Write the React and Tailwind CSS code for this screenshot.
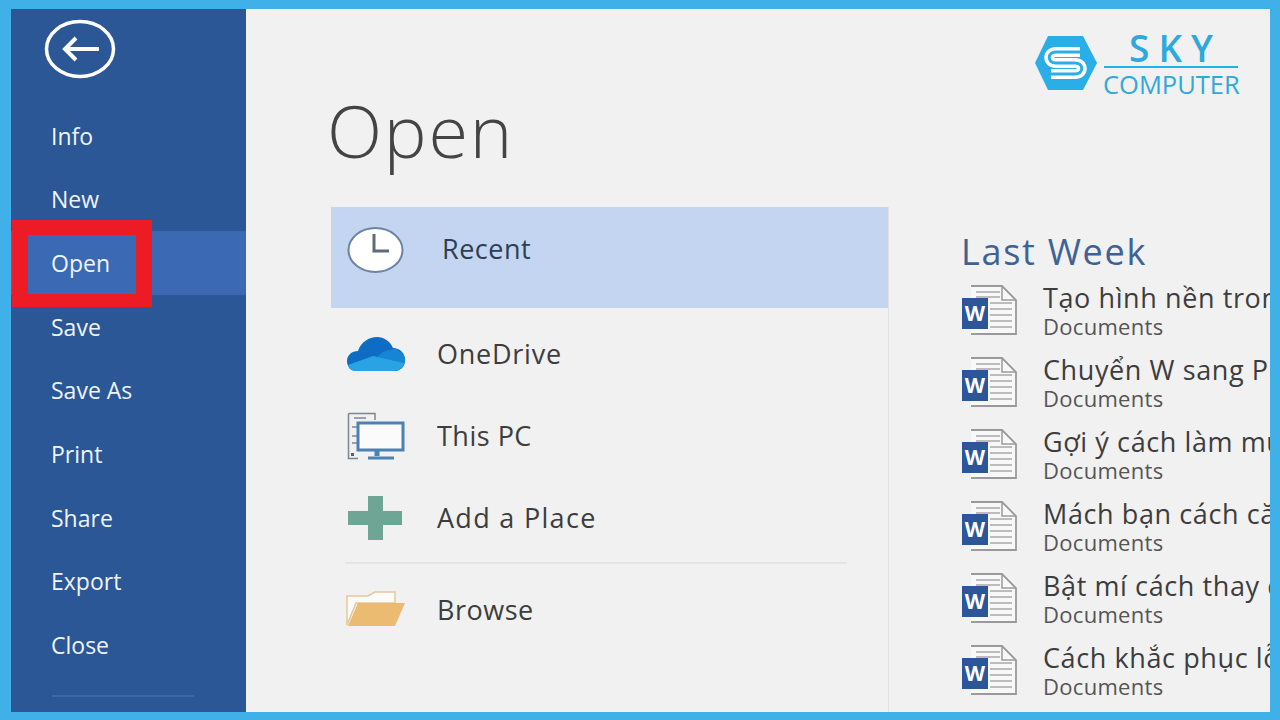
const navItems = ['Info', 'New', 'Open', 'Save', 'Save As', 'Print', 'Share', 'Export', 'Close'];

const recentDocs = [
  'Tạo hình nền trong Word',
  'Chuyển W sang PDF',
  'Gợi ý cách làm mục lục',
  'Mách bạn cách căn lề',
  'Bật mí cách thay đổi font',
  'Cách khắc phục lỗi font',
];

const BackIcon = () => (
  <svg width="72" height="60" viewBox="0 0 72 60" fill="none" stroke="white">
    <ellipse cx="36" cy="30" rx="33.5" ry="27.5" strokeWidth="3.5" />
    <path d="M21 30H55" strokeWidth="4" />
    <path d="M32 19L21 30L32 41" strokeWidth="4" />
  </svg>
);

const ClockIcon = () => (
  <svg width="58" height="48" viewBox="0 0 58 48">
    <ellipse cx="28.5" cy="24" rx="27" ry="22" fill="white" stroke="#6b84a3" strokeWidth="2" />
    <path d="M27 8V25H42" fill="none" stroke="#5d6b7c" strokeWidth="3" />
  </svg>
);

const CloudIcon = () => (
  <svg width="58" height="36" viewBox="0 0 58 36">
    <path d="M10 35C3 35 0 30 0 25C0 19 5 15 11 15C14 6 22 1 30 1C37 1 43 5 46 12C53 12 58 17 58 24C58 31 53 35 47 35Z" fill="#0f6cc4" />
    <path d="M30 22C33 17 38 14 44 14C46 12 50 13 52 15C56 17 58 20 58 24C58 31 53 35 47 35H14Z" fill="#1785d6" />
    <path d="M10 35C5 35 2 33 1 29L26 20L57 27C56 32 52 35 47 35Z" fill="#29a3e4" />
  </svg>
);

const PcIcon = () => (
  <svg width="58" height="48" viewBox="0 0 58 48" fill="none">
    <path d="M1.5 1.5H28V8M1.5 1.5V46.5H11" stroke="#7d8794" strokeWidth="1.5" />
    <path d="M7 6H19M5 15H10M5 24H10M5 31H10" stroke="#7d8794" strokeWidth="1.5" />
    <rect x="4" y="41" width="3" height="3" fill="#55606d" />
    <rect x="11" y="11" width="45" height="27" fill="#fbfbfb" stroke="#4a82b5" strokeWidth="3" />
    <path d="M30 38V44" stroke="#4a82b5" strokeWidth="5" />
    <path d="M21 46H47" stroke="#4a82b5" strokeWidth="3" />
  </svg>
);

const PlusIcon = () => (
  <svg width="54" height="44" viewBox="0 0 54 44">
    <path d="M20 0H35V15H54V29H35V44H20V29H0V15H20Z" fill="#6fa594" />
  </svg>
);

const FolderIcon = () => (
  <svg width="60" height="38" viewBox="0 0 60 38">
    <path d="M1 36V7H22L29 3H49V14H10Z" fill="#fbfbfb" stroke="#e6c795" strokeWidth="1.5" />
    <path d="M12 14H59L49 37H2Z" fill="#ebbb72" />
  </svg>
);

const WordDocIcon = () => (
  <svg width="56" height="50" viewBox="0 0 56 50" fill="none">
    <path d="M9 1H40L54 15V49H9" fill="#f8f8f8" stroke="#9a9a9a" strokeWidth="1.8" />
    <path d="M40 1V15H54" stroke="#9a9a9a" strokeWidth="1.5" />
    <path d="M14 7H38M14 12H38M28 18H50M28 24H50M28 30H50M28 36H50M28 42H50" stroke="#a8a8a8" strokeWidth="1.5" />
    <rect x="0" y="13" width="26" height="31" fill="#2b579a" />
    <text x="13" y="36" textAnchor="middle" fontSize="21" fontWeight="700" fill="white" fontFamily="'Open Sans', sans-serif">W</text>
  </svg>
);

const SkyLogo = () => (
  <svg width="64" height="56" viewBox="0 0 64 56" fill="none">
    <path d="M14 1H49L63 28L49 55H14L1 28Z" fill="#29aee8" />
    <path d="M46 17H22C13 17 13 28 22 28H41C50 28 50 39 41 39H17" stroke="white" strokeWidth="10" />
    <path d="M46 17H22C13 17 13 28 22 28H41C50 28 50 39 41 39H17" stroke="#29aee8" strokeWidth="3" />
  </svg>
);

const PlaceRow = ({ icon, label, className, labelClassName }) => (
  <div className={`flex items-center ${className}`}>
    <div className="w-[106px] pl-[16px] shrink-0 flex items-center">{icon}</div>
    <span className={labelClassName}>{label}</span>
  </div>
);

const App = () => {
  return (
    <div className="relative w-[1280px] h-[720px] overflow-hidden bg-[#3fb0e8] pt-[9px] pl-[11px] pr-[10px] pb-[8px] font-['Open_Sans',sans-serif]">
      <div className="flex h-full">
        <aside className="w-[235px] shrink-0 bg-[#2b5797] text-[#eef4fb] text-[23px]">
          <div className="h-[95px] pl-[33px] pt-[10px]">
            <BackIcon />
          </div>
          <nav>
            {navItems.map((item) => (
              <div
                key={item}
                className={`h-[63.7px] flex items-center pl-[40px] ${item === 'Open' ? 'bg-[#3c69b3]' : ''}`}
              >
                {item}
              </div>
            ))}
          </nav>
          <div className="ml-[41px] mt-[18px] w-[142px] h-[2px] bg-[#3c68ab]"></div>
        </aside>

        <main className="flex-1 bg-[#f1f1f1] overflow-hidden pl-[85px] text-[#3d3d3d]">
          <h1 className="h-[198px] pt-[76px] -ml-[4px] text-[72px] leading-[90px] tracking-[1.8px] font-light text-[#444444]">Open</h1>
          <div className="flex">
            <section className="w-[558px] shrink-0 h-[505px] border-r border-[#e2e2e2] text-[27px] tracking-[0.5px]">
              <PlaceRow icon={<ClockIcon />} label="Recent" className="h-[101px] bg-[#c3d5f0] text-[#2f3e52] pb-[16px]" labelClassName="ml-[5px]" />
              <PlaceRow icon={<CloudIcon />} label="OneDrive" className="h-[92px]" labelClassName="tracking-[0.75px]" />
              <PlaceRow icon={<PcIcon />} label="This PC" className="h-[72px]" />
              <PlaceRow icon={<span className="ml-[1px]"><PlusIcon /></span>} label="Add a Place" className="h-[88px] mt-[2px]" labelClassName="tracking-[1.3px]" />
              <div className="mx-[14px] w-[502px] h-[2px] bg-[#e4e4e4]"></div>
              <PlaceRow icon={<span className="-ml-[1px] mb-[4px]"><FolderIcon /></span>} label="Browse" className="h-[92px]" />
            </section>
            <section className="pl-[72px] flex-1 min-w-0">
              <h2 className="text-[36px] leading-[46px] mt-[22px] tracking-[1.7px] text-[#3f6296] whitespace-nowrap">Last Week</h2>
              <div className="mt-[4px]">
                {recentDocs.map((doc) => (
                  <div key={doc} className="h-[72px] flex">
                    <div className="w-[82px] pl-[1px] shrink-0 pt-[6px]">
                      <WordDocIcon />
                    </div>
                    <div className="whitespace-nowrap pt-[2px]">
                      <div className="text-[27px] leading-[33px] tracking-[0.6px]">{doc}</div>
                      <div className="text-[22px] leading-[25px] tracking-[0.3px] text-[#555555]">Documents</div>
                    </div>
                  </div>
                ))}
              </div>
            </section>
          </div>
        </main>
      </div>

      <div className="absolute left-[12px] top-[220px] w-[140px] h-[87px] border-x-[16px] border-t-[15px] border-b-[13px] border-[#ed1c24]"></div>

      <div className="absolute left-[1034px] top-[35px] flex items-start gap-[6px]">
        <SkyLogo />
        <div className="w-[136px] text-[#2fa9dc]">
          <div className="text-[37px] leading-[26px] font-semibold text-center tracking-[9px] pl-[9px] pr-[2px]">SKY</div>
          <div className="h-[2px] mt-[5px] bg-[#29aee8] w-[134px]"></div>
          <div className="text-[25.5px] leading-[32px] -ml-[1px] whitespace-nowrap">COMPUTER</div>
        </div>
      </div>
    </div>
  );
};

export default App;
